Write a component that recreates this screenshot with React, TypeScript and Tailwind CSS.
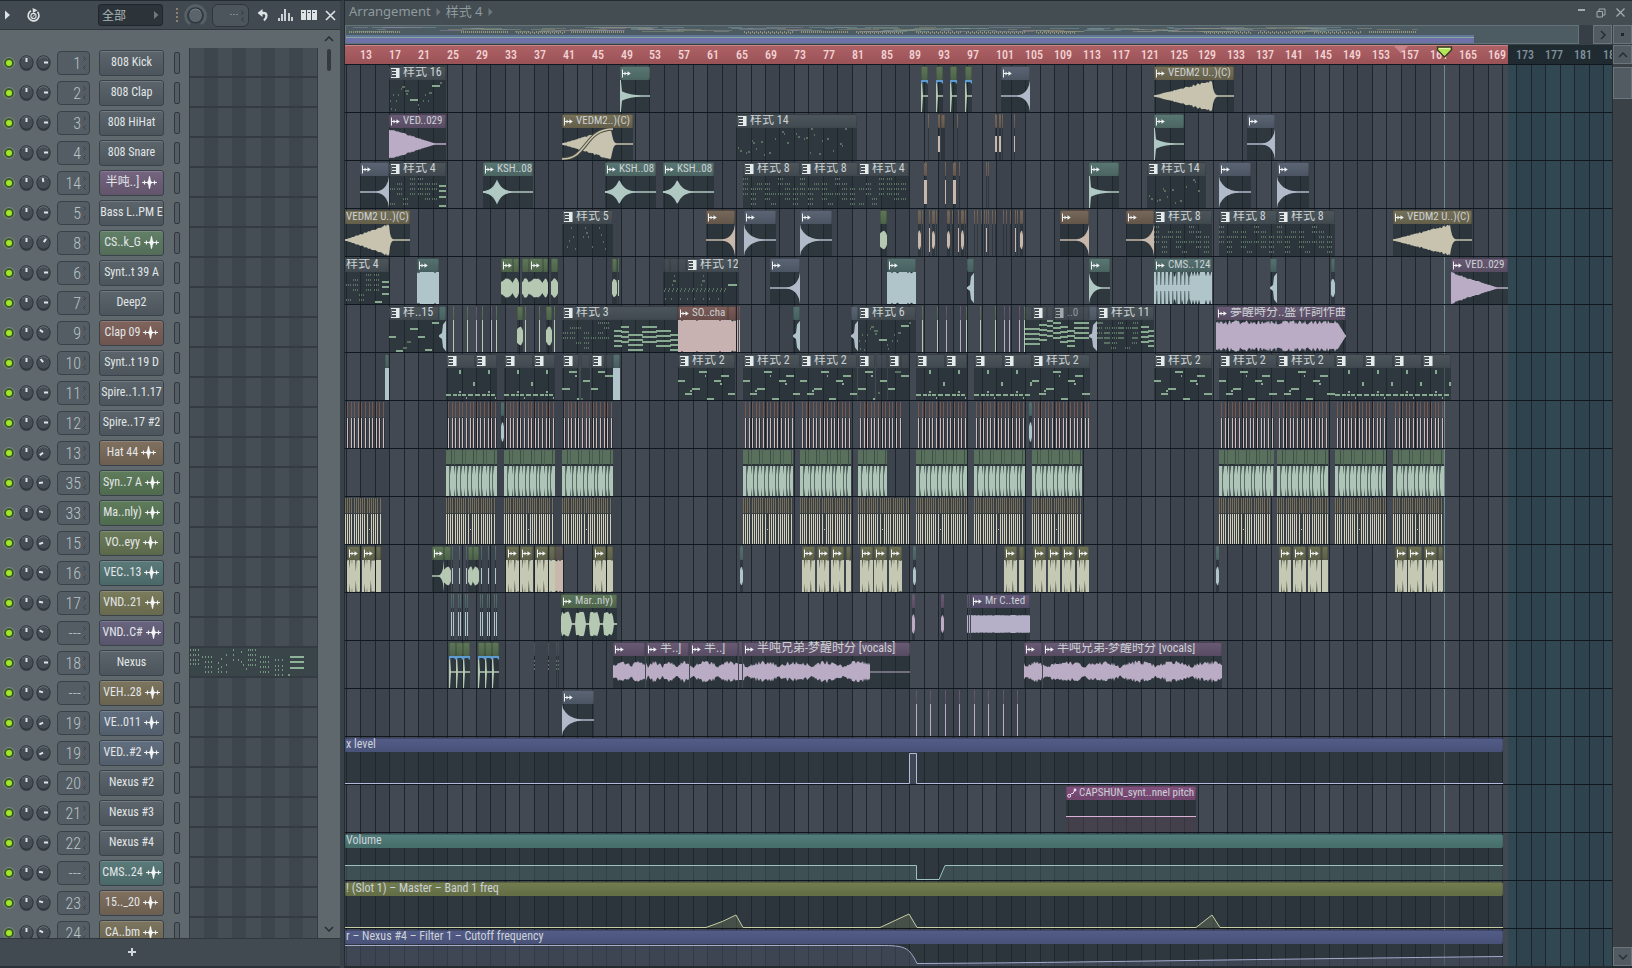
import React from "react";

const FONT = "font-['Roboto_Condensed','Liberation_Sans_Narrow','Roboto','Noto_Sans_CJK_SC',sans-serif]";

/* ---------- helpers ---------- */

const BAR = 7.225;
const barX = (bar: number) => Math.round(44.3 + (bar - 17) * BAR);
const SONG_END = 1163;

function noise(seed: number) {
  let s = seed * 7919 + 13;
  return () => {
    s = (s * 1103515245 + 12345) % 2147483648;
    return s / 2147483648;
  };
}

type Tone = "teal" | "purple" | "khaki" | "blue" | "brown" | "green" | "pink" | "olive" | "ice" | "lilac" | "pattern";

const HEAD: Record<Tone, string> = {
  teal: "from-[#5a7672] to-[#4c6763]",
  purple: "from-[#685a72] to-[#594c65]",
  khaki: "from-[#757058] to-[#65604a]",
  blue: "from-[#5a6472] to-[#4c5665]",
  brown: "from-[#75675a] to-[#65574a]",
  green: "from-[#5d7558] to-[#4e654b]",
  pink: "from-[#7a5c58] to-[#684d4a]",
  olive: "from-[#6c7054] to-[#5e6148]",
  ice: "from-[#55706f] to-[#486162]",
  lilac: "from-[#625a78] to-[#544d68]",
  pattern: "from-[#4b555a] to-[#414a50]",
};

const WAVE: Record<Tone, string> = {
  teal: "#b0c8c2",
  purple: "#baacc4",
  khaki: "#c7c3ae",
  blue: "#b0bac8",
  brown: "#c7b8ab",
  green: "#b4c8b2",
  pink: "#c8b1b1",
  olive: "#c5c8b2",
  ice: "#b0c5c9",
  lilac: "#b5b0c8",
  pattern: "#86a98f",
};

type Shape =
  | "decay" | "tail" | "rise" | "tri" | "swell" | "spike" | "block" | "vocal" | "song" | "blob" | "line"
  | "hit" | "syllables" | "band" | "comb" | "loop" | "sliver" | "dash" | "bits";

function envelope(shape: Shape, t: number, peak: number, r: number): number {
  switch (shape) {
    case "decay":
      return t < 0.03 ? 1 : 0.85 * Math.exp(-5 * t);
    case "tail":
      return t < 0.05 ? 1 : 0.36 * Math.exp(-3.2 * t);
    case "rise":
      return t > 0.97 ? 1 : 0.85 * Math.exp(-7 * (1 - t));
    case "sliver":
      return t < 0.5 ? 0.05 + 0.3 * t : t > 0.9 ? 0.95 : 0.4 + t * 0.55;
    case "tri":
      return Math.max(0, 1 - t / 0.84) * (0.88 + r * 0.14);
    case "swell":
      return t <= peak ? Math.min(1, (0.04 + 1 * Math.pow(t / peak, 1.05)) * (0.84 + r * 0.18)) : 0.7 * Math.exp(-(t - peak) * 45);
    case "spike":
      return 0.78 * Math.exp(-Math.abs(t - peak) * 10);
    case "block":
      return r < 0.15 ? 0.92 : 1;
    case "loop":
      return r < 0.1 ? 0.95 : 1;
    case "comb":
      return r < 0.3 ? 0.72 : 1;
    case "blob":
      return 0.64 * Math.pow(Math.sin(Math.PI * Math.min(0.95, Math.max(0.1, t))), 0.35) * (0.85 + r * 0.15);
    case "syllables": {
      const u = (t * 3.95) % 1;
      return u > 0.72 ? 0.05 : (0.62 + r * 0.18) * Math.min(1, (0.8 - u) * 5) * Math.min(1, u * 9 + 0.7);
    }
    case "vocal":
      return 0.72 * (0.62 + 0.38 * r) * (0.4 + 0.6 * Math.pow(Math.abs(Math.cos(t * peak * 3.14 + 1.1)), 0.5));
    case "song":
      return t > 0.94 ? Math.max(0.05, (1 - t) * 13) : 0.72 + r * 0.26;
    case "band":
      return 0.52 + r * 0.05;
    case "line":
      return 1;
    case "dash":
      return 0.5;
    case "bits":
      return 0.75;
    case "hit":
      return t < 0.2 ? 1 : 0.04;
  }
}

interface WaveProps {
  shape: Shape;
  tone: Tone;
  w: number;
  peak?: number;
  seed?: number;
  axis?: boolean;
}

function Wave({ shape, tone, w, peak = 0.25, seed = 1, axis }: WaveProps) {
  const rnd = noise(seed + w);
  const top: string[] = [];
  const bottom: string[] = [];
  for (let x = 0; x <= w; x += 1) {
    const a = Math.max(0.03, envelope(shape, x / w, peak, rnd())) * 16;
    top.push(`${x} ${(16 - a).toFixed(1)}`);
    bottom.unshift(`${x} ${(16 + a * (shape === "vocal" ? 0.8 + rnd() * 0.2 : 1)).toFixed(1)}`);
  }
  const cuts: number[] = [];
  if (shape === "comb") for (let x = 2; x < w * 0.6; x += 4) cuts.push(x);
  return (
    <svg className="block" width={w} height={32} viewBox={`0 0 ${w} 32`} aria-hidden="true">
      <path d={`M${top.join("L")}L${bottom.join("L")}Z`} fill={WAVE[tone]} />
      {cuts.map((x) => (
        <path key={x} d={`M${x} 0h1.6l-.4 13h-.8ZM${x} 32h1.6l-.4 -13h-.8Z`} fill="#4b5a5e" />
      ))}
      {shape === "loop" && w > 8 && (
        <path d={`M2 0h1.2l-.6 9ZM2 32h1.2l-.6 -9ZM${w - 5} 0h1.6l-.8 12ZM${w - 5} 32h1.6l-.8 -12ZM4.600 0h.8l-.4 5ZM4.600 32h.8l-.4 -5Z`} fill="#5c6155" />
      )}
      {axis && <path d={`M0 16H${w}`} stroke={WAVE[tone]} />}
    </svg>
  );
}

/* ---------- note data for pattern clips: [x, y, width] ---------- */

type Note = [number, number, number];

const melody: Note[] = [[0, 12, 7], [7, 25, 7], [12, 22, 2], [14, 20, 8], [21, 3, 8], [27, 7, 1], [29, 30, 7], [36, 12, 7], [42, 15, 2], [43, 7, 8], [50, 25, 8]];
const melodyCut: Note[] = [[0, 20, 8], [7, 3, 8], [13, 7, 2], [15, 30, 3], [18, 27, 1], [19, 24, 2], [22, 12, 7], [29, 20, 7], [36, 3, 8], [42, 7, 9]];
const kick: Note[] = [[0, 26, 5], [7, 26, 4], [12, 26, 3], [13, 23, 2], [13, 2, 2], [13, 4, 2], [16, 26, 4], [20, 29, 1], [22, 26, 5], [27, 16, 2], [27, 14, 2]];
const arp: Note[] = [[1, 20, 1], [2, 28, 1], [4, 14, 1], [7, 20, 1], [6, 29, 1], [9, 14, 1], [12, 8, 1], [13, 6, 3], [16, 10, 4], [17, 13, 2], [21, 19, 8], [29, 24, 1], [30, 28, 1], [34, 20, 1], [36, 14, 1], [39, 20, 1], [40, 12, 3], [43, 5, 8], [51, 2, 2]];
const slow: Note[] = [[0, 16, 7], [7, 30, 7], [14, 27, 4], [18, 21, 4], [21, 8, 8], [29, 16, 7], [36, 29, 7], [43, 2, 7]];
const sparse: Note[] = [[2, 19, 1], [4, 22, 2], [10, 24, 1], [12, 23, 2], [16, 12, 1], [17, 14, 2], [20, 20, 1], [25, 13, 2], [28, 26, 1], [33, 24, 2], [39, 10, 1], [46, 3, 2], [48, 5, 1], [51, 14, 2]];
const riff: Note[] = [[5, 22, 1], [7, 16, 1], [9, 3, 1], [11, 12, 1], [13, 24, 1], [21, 12, 1], [23, 3, 1], [24, 8, 2], [26, 12, 1], [30, 22, 1], [37, 3, 1], [39, 10, 1], [41, 17, 1], [43, 24, 1]];

function dots(w: number, seed = 3): Note[] {
  const out: Note[] = [];
  const rnd = noise(seed);
  for (let c = 0; c < w - 4; c += 7) {
    const base = Math.floor(rnd() * 3) * 5 + 2;
    const offset = Math.floor(rnd() * 2);
    for (let row = 0; row < 4; row += 1) {
      if (rnd() < 0.3) continue;
      out.push([c + offset, base + row * 5, 1], [c + offset + 2, base + row * 5, 1], [c + offset + 4, base + row * 5, 1]);
    }
  }
  return out;
}

function chords(from: number, to: number, seed: number, low = 0): Note[] {
  const out: Note[] = [];
  const rnd = noise(seed);
  for (let c = from; c < to - 3; c += 7) {
    const base = low + Math.floor(rnd() * 3) * 4;
    for (let k = 0; k < 4; k += 1) out.push([c, base + k * 5, 8]);
  }
  return out;
}

function strum(w: number): Note[] {
  const out: Note[] = [];
  for (let x = 1; x < w - 14; x += 4) out.push([x, 18, 1], [x + 1, 16, 1]);
  for (const x of [2, 8, 17, 24, 31, 40, 46, 55]) out.push([x, 26, 1]);
  for (const x of [11, 40]) out.push([x - 2, 12, 1], [x - 1, 8, 2], [x, 3, 1], [x + 1, 8, 1]);
  out.push([65, 12, 9]);
  return out;
}

const between = (notes: Note[], from: number, to: number): Note[] => notes.filter(([x]) => x >= from && x < to).map(([x, y, n]): Note => [x - from, y, n]);

function Notes({ notes, w, bright }: { notes: Note[]; w: number; bright?: boolean }) {
  return (
    <svg className="block" width={w} height={32} viewBox={`0 0 ${w} 32`} aria-hidden="true" shapeRendering="crispEdges">
      {notes.map(([x, y, nw], i) => (
        <rect key={i} x={x} y={Math.min(30, y)} width={nw} height={2} fill={bright || nw >= 7 ? "#86a98f" : "#587162"} />
      ))}
    </svg>
  );
}

/* ---------- small glyphs ---------- */

function WaveGlyph() {
  return (
    <svg className="shrink-0" width="9" height="9" viewBox="0 0 9 9" aria-hidden="true">
      <path d="M0.500 0.500v8M1 4.500h7" stroke="#eef1f2" fill="none" />
      <path d="M2.500 2.600L4.600 4.500L2.500 6.400ZM5.400 2.200L8.800 4.500L5.400 6.800Z" fill="#eef1f2" />
    </svg>
  );
}

function PatternGlyph() {
  return (
    <svg className="shrink-0" width="9" height="10" viewBox="0 0 9 10" aria-hidden="true" shapeRendering="crispEdges">
      <path d="M5 0h3v10H5Z M0 0h6v1H0Z M1 3h4v1H1Z M1 6h4v1H1Z M0 9h6v1H0Z" fill="#e6ebec" />
      <path d="M0 1h1v8H0Z" fill="#5d676c" />
      <path d="M8 0h1v10H8Z" fill="#9aa5aa" />
    </svg>
  );
}

function ChannelWave() {
  return (
    <svg className="shrink-0" width="15" height="13" viewBox="0 0 15 13" aria-hidden="true">
      <path d="M0 6.500h15M2.500 4.500v4M12.500 4.500v4" stroke="#eef1f2" strokeWidth="1.200" fill="none" />
      <path d="M4.800 6.500L6.200 4.500L7 0.200H8L8.800 4.500L10.200 6.500L8.800 8.500L8 12.800H7L6.200 8.500Z" fill="#f2f4f5" />
    </svg>
  );
}

/* ---------- clips ---------- */

interface ClipData {
  x: number;
  e: number;
  tone: Tone;
  label?: string;
  icon?: boolean;
  shape?: Shape;
  peak?: number;
  notes?: Note[];
  bright?: boolean;
  cut?: boolean;
  dim?: boolean;
  blue?: boolean;
  fade?: boolean;
}

const AXIS_SHAPES: Shape[] = ["decay", "tail", "rise", "tri", "swell", "spike", "hit", "syllables"];
const isLatin = (text: string) => /^[\x20-\x7e]*$/.test(text);

function Clip(c: ClipData) {
  const w = c.e - c.x;
  return (
    <div className="absolute top-px h-[47px] overflow-hidden" style={{ left: c.x, width: w }}>
      <div
        className={`flex h-[14px] items-center gap-[3px] overflow-hidden whitespace-nowrap rounded-[2px] bg-linear-to-b text-[#ccd2d5] ${w > 3 ? "border border-black/15" : ""} ${HEAD[c.tone]} ${c.cut ? "" : "pl-px"} ${c.dim ? "opacity-60" : ""} ${c.label && isLatin(c.label) ? "text-[11px]" : "text-[12px]"}`}
      >
        {c.icon && (c.tone === "pattern" ? <PatternGlyph /> : <WaveGlyph />)}
        {c.label && <span className="pb-px leading-[13px]">{c.label}</span>}
      </div>
      <div className="relative h-[33px] bg-[#1e2a2d]/55">
        {c.shape && <Wave shape={c.shape} tone={c.tone} w={w} peak={c.peak} seed={c.x} axis={AXIS_SHAPES.includes(c.shape)} />}
        {c.notes && <Notes notes={c.notes} w={w} bright={c.bright} />}
        {c.blue && <svg className="absolute left-0 top-0" width={w} height="5" viewBox="0 0 7 5" preserveAspectRatio="none"><path d="M0 0H7V4L5 2L2 2L0 4Z" fill="#5b9bd0" /></svg>}
        {c.fade && (
          <svg className="absolute left-0 top-0" width="52" height="32" viewBox="0 0 52 32" aria-hidden="true">
            <path d="M0 31C26 31 22 1 51 1" stroke="#4a4b40" strokeWidth="3.400" fill="none" />
            <path d="M0 31C26 31 22 1 51 1" stroke="#c7c3ae" strokeWidth="1.600" fill="none" />
          </svg>
        )}
      </div>
    </div>
  );
}

const pat = (x: number, e: number, label: string | undefined, notes: Note[], extra: Partial<ClipData> = {}): ClipData => ({ x, e, tone: "pattern", icon: e - x > 11, label, notes, ...extra });
const wav = (x: number, e: number, tone: Tone, shape: Shape, label?: string, extra: Partial<ClipData> = {}): ClipData => ({ x, e, tone, shape, label, icon: e - x > 12, ...extra });
const slivers = (tone: Tone, shape: Shape, xs: number[], w = 1): ClipData[] => xs.map((x) => ({ x, e: x + w, tone, shape }));
const marks = (tone: Tone, xs: number[], w = 1): ClipData[] => xs.map((x) => ({ x, e: x + w, tone }));

function kicks(x: number, e: number): ClipData[] {
  return [pat(x, Math.min(x + 29, e), undefined, kick, { bright: true }), pat(x + 29, e, undefined, kick, { bright: true })];
}

const LINE_GROUPS: [number, number][] = [[0, 41], [101, 152], [159, 210], [217, 268], [398, 448], [455, 506], [513, 557], [571, 622], [629, 680], [687, 744], [874, 929], [932, 983], [990, 1041], [1048, 1099]];
const BLOCK_GROUPS: [number, number][] = [[101, 152], [159, 210], [217, 268], [398, 448], [455, 506], [513, 542], [571, 622], [629, 680], [687, 737], [874, 929], [932, 983], [990, 1041], [1048, 1099]];
const HAT_GROUPS: [number, number][] = [[0, 36], [101, 151], [159, 209], [217, 267], [398, 448], [455, 506], [513, 564], [571, 622], [629, 679], [687, 737], [874, 925], [932, 983], [990, 1041], [1048, 1098]];

function StripeGroup({ x, e, kind }: { x: number; e: number; kind: "line" | "block" | "hat" }) {
  const w = e - x;
  const items: React.ReactNode[] = [];
  if (kind === "line") {
    for (let i = 2; i < w; i += 3.61) {
      const px = Math.round(i);
      items.push(<rect key={`d${px}`} x={px + 1} y={16} width={1} height={31} fill="#2b3238" />);
      items.push(<rect key={px} x={px} y={0} width={1} height={15} fill="#77584f" />, <rect key={`b${px}`} x={px} y={16} width={1} height={31} fill="#d0b9b9" />);
    }
  } else if (kind === "block") {
    items.push(<rect key="h" width={w} height={14} fill="#58705c" />, <rect key="d" y={14} width={w} height={2} fill="#2b3538" />, <rect key="w" y={16} width={w} height={31} fill="#aec4b6" />);
    for (let i = 3, n = 0; i < w; i += 3.61, n += 1) {
      const px = Math.round(i);
      if (n % 3 !== 1) items.push(<path key={px} d={`M${px} 16h1v31h-1Z`} fill="#3f4f4d" opacity={0.75} />);
      items.push(<path key={`n${px}`} d={`M${px + 1} 16h1.2l-.6 9ZM${px + 1} 47h1.2l-.6 -9Z`} fill="#42524f" />);
    }
    for (let i = 5; i < w; i += 10.8) items.push(<rect key={`s${i}`} x={Math.round(i)} width={1} height={15} fill="#3f4f48" />, <rect key={`t${i}`} x={Math.round(i) + 3} width={1} height={15} fill="#4a5d50" />);
  } else {
    items.push(<rect key="bg" width={w} height={47} fill="#373f45" />);
    for (let i = 0, n = 0; i < w; i += 2.16, n += 1) {
      const px = Math.round(i);
      items.push(<rect key={px} x={px} width={1} height={15} fill="#786f5a" />);
      if (n % 13 !== 11) items.push(<rect key={`b${px}`} x={px} y={16} width={1} height={31} fill="#d2ceba" />);
      else items.push(<rect key={`b${px}`} x={px} y={31} width={1} height={1} fill="#cbc7b4" />);
    }
  }
  return (
    <svg className="absolute top-px" style={{ left: x }} width={w} height={47} viewBox={`0 0 ${w} 47`} aria-hidden="true" shapeRendering={kind === "block" ? "auto" : "crispEdges"}>
      {items}
    </svg>
  );
}

/* ---------- automation lanes ---------- */

interface LaneData {
  x: number;
  e: number;
  label: string;
  head: string;
  line: string;
  stroke: string;
  fill: string;
  glyph?: boolean;
}

function Lane({ x, e, label, head, line, stroke, fill, glyph }: LaneData) {
  const w = e - x;
  return (
    <div className="absolute top-px h-[47px] overflow-hidden" style={{ left: x, width: w }}>
      <div className={`flex h-[14px] items-center gap-[2px] whitespace-nowrap rounded-[2px] border border-black/10 bg-linear-to-b text-[#ccd2d8] ${glyph ? "text-[11px]" : "text-[12px]"} ${head}`}>
        {glyph && (
          <svg className="shrink-0" width="10" height="10" viewBox="0 0 10 10" aria-hidden="true">
            <path d="M3 7L4.500 5.500H6L7.500 2.500" stroke="#eddff0" fill="none" />
            <circle cx="2.200" cy="7.800" r="1.500" stroke="#eddff0" fill="none" />
            <circle cx="8" cy="2" r="1.400" fill="#eddff0" />
          </svg>
        )}
        <span className="pb-px leading-[13px]">{label}</span>
      </div>
      <svg className="block bg-[#1e2a2d]/55" width={w} height={33} viewBox={`0 0 ${w} 33`} aria-hidden="true">
        <path d={`${line}V33H0Z`} fill={fill} />
        <path d={line} stroke={stroke} fill="none" />
      </svg>
    </div>
  );
}

const LANES: Record<number, LaneData> = {
  14: { x: 0, e: 1158, label: "x level", head: "from-[#535c88] to-[#495278]", line: "M0 31.500H564.500V1.500H571.500V31.500H1158", stroke: "#b4badb", fill: "rgba(130,135,170,.2)" },
  15: { x: 721, e: 851, label: "CAPSHUN_synt..nnel pitch", head: "from-[#80507c] to-[#70446c]", line: "M0 16.500H130", stroke: "#dcb0d6", fill: "rgba(170,110,140,.2)", glyph: true },
  16: { x: 0, e: 1158, label: "Volume", head: "from-[#527c7a] to-[#456e6b]", line: "M0 17.500H571.500V31.500H594L600 17.500H1158", stroke: "#9cc0c0", fill: "rgba(130,180,170,.2)" },
  17: { x: 0, e: 1158, label: "! (Slot 1) – Master – Band 1 freq", head: "from-[#727c50] to-[#646e45]", line: "M0 31.500H361Q378 26 391 19L398 31.500H535L564 18L572 31.500H851L867 19L875 31.500H1158", stroke: "#c6cca4", fill: "rgba(180,190,130,.2)" },
  18: { x: 0, e: 1158, label: "r – Nexus #4 – Filter 1 – Cutoff frequency", head: "from-[#535c88] to-[#495278]", line: "M0 1.500H535C560 1.500 564 3 572 19.500C700 19 850 16 1158 12.500", stroke: "#a4aace", fill: "rgba(130,135,170,.2)" },
};

/* ---------- track contents ---------- */

const strumNotes = strum(76);

const TRACKS: ClipData[][] = [
  [
    pat(44, 101, "样式 16", arp),
    wav(275, 305, "teal", "tail"),
    ...[576, 591, 605, 620].map((x) => wav(x, x + 7, "green", "hit", undefined, { blue: true })),
    wav(656, 685, "blue", "rise"),
    wav(809, 889, "khaki", "swell", "VEDM2 U..)(C)", { peak: 0.73 }),
  ],
  [
    wav(44, 101, "purple", "tri", "VED..029"),
    wav(217, 288, "khaki", "swell", "VEDM2..)(C)", { peak: 0.7, fade: true }),
    pat(391, 512, "样式 14", [...sparse, ...sparse.map(([x, y, n]): Note => [x + 58, (y + 12) % 26, n])]),
    ...slivers("brown", "dash", [593], 2), ...marks("brown", [583, 612]), ...marks("brown", [596], 4),
    ...slivers("brown", "dash", [650, 654], 2), ...marks("brown", [657]),
    ...slivers("brown", "dash", [669], 1),
    wav(809, 839, "teal", "tail"),
    wav(902, 930, "blue", "rise"),
  ],
  [
    wav(15, 44, "blue", "rise"),
    pat(44, 101, "样式 4", [...dots(50, 4), [50, 9, 7], [50, 14, 7], [50, 20, 7], [50, 29, 7]]),
    wav(138, 188, "teal", "spike", "KSH..08", { peak: 0.28 }),
    wav(260, 311, "teal", "spike", "KSH..08", { peak: 0.28 }),
    wav(318, 369, "teal", "spike", "KSH..08", { peak: 0.28 }),
    pat(398, 455, "样式 8", dots(57, 5)),
    pat(455, 513, "样式 8", dots(57, 5)),
    pat(513, 564, "样式 4", dots(50, 4)),
    ...slivers("brown", "bits", [579, 608], 3),
    ...slivers("brown", "bits", [600], 1),
    ...marks("brown", [614, 641, 643]),
    wav(744, 774, "teal", "tail"),
    pat(802, 861, "样式 14", sparse),
    wav(874, 906, "blue", "decay"),
    wav(932, 964, "blue", "decay"),
  ],
  [
    wav(0, 65, "khaki", "swell", "VEDM2 U..)(C)", { peak: 0.68, cut: true, icon: false }),
    pat(217, 268, "样式 5", riff),
    wav(361, 390, "brown", "rise"),
    wav(399, 431, "blue", "decay"),
    wav(455, 487, "blue", "decay"),
    wav(535, 542, "green", "blob"),
    ...slivers("brown", "blob", [573, 587, 602, 616], 3),
    ...slivers("brown", "bits", [584, 613, 641, 670], 1),
    ...marks("brown", [577, 591, 607, 620, 629, 632, 636, 639, 643, 647, 650, 658, 661, 665, 672]),
    ...slivers("brown", "blob", [675], 3),
    wav(715, 744, "brown", "rise"),
    wav(781, 809, "brown", "rise"),
    pat(809, 867, "样式 8", dots(57, 5)),
    pat(874, 932, "样式 8", dots(57, 5)),
    pat(932, 990, "样式 8", dots(57, 5)),
    wav(1048, 1127, "khaki", "swell", "VEDM2 U..)(C)", { peak: 0.73 }),
  ],
  [
    pat(0, 44, "样式 4", [...dots(36, 4), [37, 9, 7], [37, 14, 7], [37, 21, 7], [30, 29, 7]], { icon: false, cut: true }),
    wav(72, 94, "ice", "block"),
    wav(156, 168, "green", "blob", undefined, { icon: true }), wav(168, 174, "green", "blob"), wav(177, 184, "green", "blob"),
    wav(184, 198, "green", "blob"), wav(198, 203, "green", "blob"), wav(206, 213, "green", "blob"),
    wav(267, 272, "green", "blob"), wav(273, 274, "green", "dash"),
    pat(318, 325, undefined, between(strumNotes, 0, 7), { dim: true }), pat(325, 333, undefined, between(strumNotes, 7, 15), { dim: true }), pat(333, 341, undefined, between(strumNotes, 15, 23), { dim: true }),
    pat(341, 394, "样式 12", between(strumNotes, 23, 76)),
    wav(425, 455, "blue", "rise"),
    wav(542, 571, "ice", "block"),
    wav(622, 629, "ice", "sliver"),
    wav(744, 765, "teal", "decay"),
    wav(809, 867, "ice", "comb", "CMS..124"),
    wav(925, 932, "ice", "sliver"),
    wav(986, 990, "ice", "blob"),
    wav(1106, 1163, "purple", "tri", "VED..029"),
  ],
  [
    pat(44, 94, "样..15", slow),
    wav(94, 101, "ice", "sliver"),
    ...slivers("green", "line", [108, 122, 137, 151, 180, 194, 209]),
    ...slivers("purple", "line", [131, 146]),
    wav(172, 178, "green", "blob"), wav(201, 207, "green", "blob"),
    pat(217, 333, "样式 3", [...dots(52, 6), ...chords(52, 116, 3, 6)]),
    wav(333, 383, "pink", "block", "SO..cha"), wav(383, 391, "pink", "block"),
    ...slivers("pink", "line", [392, 394]),
    wav(448, 455, "ice", "sliver"), wav(506, 513, "blue", "sliver"),
    pat(513, 571, "样式 6", arp),
    ...slivers("green", "line", [577, 592, 621, 635, 650, 679]),
    ...slivers("purple", "line", [601, 615, 659, 664, 674]),
    pat(680, 687, undefined, chords(0, 7, 1), { dim: true }), pat(687, 702, undefined, chords(0, 15, 4)), pat(702, 708, undefined, chords(0, 7, 2), { dim: true }),
    pat(708, 744, "..0", chords(0, 36, 8, 2), { dim: true }),
    wav(744, 752, "blue", "sliver"),
    pat(752, 809, "样式 11", [...dots(44, 9), ...dots(44, 12), ...chords(44, 57, 2, 6)]),
    wav(871, 1001, "purple", "song", "夢醒時分..盛 作詞作曲"),
  ],
  [
    wav(40, 44, "ice", "block"),
    ...kicks(101, 152), ...kicks(159, 210),
    pat(217, 234, undefined, melodyCut, { bright: true }), pat(236, 245, undefined, [[0, 30, 2], [2, 12, 7]], { dim: true }), pat(246, 260, undefined, [[0, 20, 7], [7, 3, 7]]), pat(260, 268, undefined, [[0, 7, 8]], { dim: true }),
    wav(268, 275, "ice", "block"),
    ...[333, 398, 455].map((x) => pat(x, x + 57, "样式 2", melody, { bright: true })),
    pat(513, 530, undefined, melodyCut, { bright: true }), pat(531, 542, undefined, [[2, 24, 2], [4, 12, 7]], { dim: true, icon: false }), pat(543, 556, undefined, [[0, 20, 7], [7, 3, 6]]), pat(556, 564, undefined, [[0, 7, 8]], { dim: true }),
    ...kicks(571, 622), ...kicks(629, 687),
    ...[687, 809, 874, 932].map((x) => pat(x, x + 58, "样式 2", melody, { bright: true })),
    ...kicks(990, 1048), ...kicks(1048, 1106),
  ],
  [wav(156, 159, "ice", "blob"), wav(684, 687, "ice", "blob")],
  [],
  [],
  [
    ...[[2, 15], [17, 30], [31, 36], [161, 174], [175, 188], [190, 203], [204, 210], [248, 261], [262, 268], [457, 470], [472, 484], [486, 499], [501, 506], [515, 528], [529, 542], [544, 557], [659, 672], [674, 679], [688, 701], [703, 715], [717, 730], [732, 744], [934, 946], [948, 961], [963, 976], [977, 983], [1050, 1062], [1063, 1077], [1079, 1092], [1093, 1098]].map(
      ([x, e]) => wav(x, e, "olive", "loop", undefined, { icon: e - x > 10 }),
    ),
    wav(87, 99, "green", "rise", undefined, { icon: true }), wav(93, 99, "green", "blob"), wav(99, 106, "green", "blob"),
    wav(123, 128, "green", "blob"), wav(128, 134, "green", "blob"),
    ...slivers("ice", "dash", [107, 114, 121, 136, 143, 150]),
    wav(210, 218, "brown", "block", undefined, { dim: true }),
    wav(395, 398, "ice", "blob"), wav(568, 571, "ice", "blob"), wav(871, 874, "ice", "blob"),
  ].filter((c) => c.x !== 93),
  [
    ...slivers("ice", "bits", [106, 108, 113, 115, 120, 122, 135, 137, 142, 144, 149, 151]),
    wav(216, 272, "green", "syllables", "Mar..nly)"),
    wav(567, 570, "purple", "blob"), wav(596, 599, "purple", "blob"),
    ...slivers("lilac", "band", [622, 624]),
    wav(626, 685, "lilac", "band", "Mr C..ted"),
  ],
  [
    ...[104, 111, 118, 133, 140, 147].map((x) => wav(x, x + 7, "green", "hit", undefined, { blue: true })),
    ...[189, 203, 211, 213].map((x): ClipData => ({ x, e: x + 1, tone: "pattern", notes: [[0, 4, 1], [0, 8, 1], [0, 12, 1]] })),
    wav(268, 300, "purple", "vocal", undefined, { peak: 2 }), wav(301, 344, "purple", "vocal", "半..]", { peak: 3 }), wav(345, 393, "purple", "vocal", "半..]", { peak: 2 }), wav(394, 397, "purple", "dash"),
    wav(398, 525, "purple", "vocal", undefined, { peak: 4 }),
    wav(679, 697, "purple", "vocal", undefined, { peak: 1 }), wav(698, 877, "purple", "vocal", "半吨兄弟-梦醒时分 [vocals]", { peak: 5 }),
  ],
  [wav(217, 249, "blue", "decay"), ...slivers("purple", "line", [571, 585, 600, 614, 629, 643, 658, 672])],
  [], [], [], [], [],
];

function VocalTail() {
  return (
    <div className="absolute top-px h-[47px] w-[167px]" style={{ left: 398 }}>
      <div className="flex h-[14px] items-center gap-[3px] whitespace-nowrap rounded-[2px] border border-black/15 bg-linear-to-b from-[#685a72] to-[#594c65] pl-px text-[12px] text-[#ccd2d5]">
        <WaveGlyph />
        <span className="pb-px leading-[13px]">半吨兄弟-梦醒时分 [vocals]</span>
      </div>
      <svg className="ml-[127px] block bg-[#1e2a2d]/55" width="40" height="33" viewBox="0 0 40 33" aria-hidden="true">
        <path d="M0 16H40" stroke="#baacc4" />
      </svg>
    </div>
  );
}

function Track({ index }: { index: number }) {
  const lane = LANES[index];
  const groups = index === 7 ? LINE_GROUPS : index === 8 ? BLOCK_GROUPS : index === 9 ? HAT_GROUPS : [];
  const kind = index === 7 ? "line" : index === 8 ? "block" : "hat";
  return (
    <div className="relative h-12 shrink-0 border-t border-[#11171e]">
      {groups.map(([x, e]) => (
        <StripeGroup key={x} x={x} e={e} kind={kind} />
      ))}
      {TRACKS[index].map((c, i) => (
        <Clip key={i} {...c} />
      ))}
      {index === 12 && <VocalTail />}
      {lane && <Lane {...lane} />}
    </div>
  );
}

/* ---------- channel rack ---------- */

type ChannelTone = "plain" | "purple" | "green" | "red" | "brown" | "olive" | "teal" | "moss" | "violet" | "khaki" | "blue" | "leaf";

const CHANNEL_BG: Record<ChannelTone, string> = {
  plain: "from-[#5b656b] to-[#4b555b]",
  purple: "from-[#756580] to-[#62546b]",
  green: "from-[#628068] to-[#526c58]",
  red: "from-[#80645e] to-[#6e534e]",
  brown: "from-[#80705f] to-[#6c5e50]",
  leaf: "from-[#5f7c5c] to-[#4f6a4d]",
  olive: "from-[#6c7c5a] to-[#5b694b]",
  teal: "from-[#5b7a7a] to-[#4b6868]",
  moss: "from-[#7a7c5c] to-[#68694d]",
  violet: "from-[#696580] to-[#58546c]",
  khaki: "from-[#7c755f] to-[#69634f]",
  blue: "from-[#626f80] to-[#525e6c]",
};

interface Channel {
  slot: string;
  name: string;
  tone?: ChannelTone;
  turn?: number;
}

const CHANNELS: Channel[] = [
  { slot: "1", name: "808 Kick" },
  { slot: "2", name: "808 Clap" },
  { slot: "3", name: "808 HiHat" },
  { slot: "4", name: "808 Snare" },
  { slot: "14", name: "半吨..]", tone: "purple", turn: -10 },
  { slot: "5", name: "Bass L..PM E" },
  { slot: "8", name: "CS..k_G", tone: "green", turn: 35 },
  { slot: "6", name: "Synt..t 39 A" },
  { slot: "7", name: "Deep2" },
  { slot: "9", name: "Clap 09", tone: "red", turn: -55 },
  { slot: "10", name: "Synt..t 19 D", turn: -40 },
  { slot: "11", name: "Spire..1.1.17" },
  { slot: "12", name: "Spire..17 #2" },
  { slot: "13", name: "Hat 44", tone: "brown", turn: -125 },
  { slot: "35", name: "Syn..7 A", tone: "leaf", turn: -95 },
  { slot: "33", name: "Ma..nly)", tone: "leaf", turn: -75 },
  { slot: "15", name: "VO..eyy", tone: "olive", turn: -110 },
  { slot: "16", name: "VEC..13", tone: "teal", turn: -80 },
  { slot: "17", name: "VND..21", tone: "moss", turn: -80 },
  { slot: "---", name: "VND..C#", tone: "violet", turn: -60 },
  { slot: "18", name: "Nexus" },
  { slot: "---", name: "VEH..28", tone: "khaki", turn: -75 },
  { slot: "19", name: "VE..011", tone: "blue", turn: -115 },
  { slot: "19", name: "VED..#2", tone: "blue", turn: -115 },
  { slot: "20", name: "Nexus #2" },
  { slot: "21", name: "Nexus #3" },
  { slot: "22", name: "Nexus #4" },
  { slot: "---", name: "CMS..24", tone: "teal", turn: -80 },
  { slot: "23", name: "15.._20", tone: "brown", turn: -75 },
  { slot: "24", name: "CA..bm", tone: "khaki", turn: -65 },
];

function Knob({ turn, label }: { turn: number; label: string }) {
  return (
    <label className="relative block h-4 w-[15px]">
      <input type="range" min={-135} max={135} defaultValue={turn} aria-label={label} className="absolute inset-0 h-4 w-[15px] opacity-0" />
      <svg width="15" height="16" viewBox="0 0 15 16" className="block" aria-hidden="true">
        <ellipse cx="7.500" cy="9.500" rx="6.500" ry="6.500" fill="#353d42" />
        <circle cx="7.500" cy="7.500" r="6.700" fill="#454e54" stroke="#2d353a" />
        <path d="M3 4A5.600 5.600 0 0 1 12 4" stroke="#646e74" fill="none" />
        <path d="M7.500 7V3" stroke="#e0e5e8" strokeWidth="2" transform={`rotate(${turn} 7.500 7.500)`} />
      </svg>
    </label>
  );
}

const NEXUS_NOTES: Note[] = [
  ...[0, 3, 5, 8].flatMap((x): Note[] => [[x, 1, 1], [x, 6, 1], [x, 11, 1], [x, 15, 1]]),
  [12, 8, 1],
  ...[15, 18, 21].flatMap((x): Note[] => [[x, 8, 1], [x, 13, 1], [x, 18, 1], [x, 23, 1]]),
  ...[28, 31, 36].flatMap((x, i): Note[] => [[x, 14 - i * 4, 1], [x, 20 - i * 2, 1], [x, 23, 1]]),
  [43, 1, 1], [43, 6, 1], [43, 11, 1], [48, 11, 1], [51, 3, 1], [51, 13, 1], [53, 16, 1], [56, 20, 1],
  ...[58, 60, 62, 65].flatMap((x): Note[] => [[x, 1, 1], [x, 6, 1], [x, 11, 1], [x, 16, 1]]),
  ...[70, 73, 75, 78].flatMap((x): Note[] => [[x, 8, 1], [x, 13, 1], [x, 18, 1], [x, 23, 1]]),
  ...[85, 88, 92].flatMap((x): Note[] => [[x, 11, 1], [x, 17, 1], [x, 21, 1], [x, 26, 1]]),
  [98, 26, 2], [100, 8, 14], [100, 13, 14], [100, 19, 14],
];

function ChannelRow({ slot, name, tone = "plain", turn = 90 }: Channel) {
  const active = name === "Nexus";
  return (
    <div className="flex h-[30px] shrink-0 items-center">
      <input type="checkbox" defaultChecked aria-label={`${name} on`} className="ml-[4px] size-[10px] shrink-0 appearance-none rounded-full border-2 border-[#3d5a2a] bg-[#a0e828] outline outline-[#7d8a7d]" />
      <div className="ml-[5px] flex shrink-0 gap-[2px]">
        <Knob turn={0} label={`${name} pan`} />
        <Knob turn={turn} label={`${name} volume`} />
      </div>
      <div className="relative ml-[6px] h-6 w-[33px] shrink-0 rounded-[4px] border border-[#394248] bg-[#535d63]">
        <input defaultValue={slot} aria-label={`${name} mixer track`} className="h-full w-[23px] bg-transparent text-right text-[16px] font-light text-[#bac3c8] outline-none" />
        <svg className="absolute right-[2px] top-[4px]" width="5" height="14" viewBox="0 0 5 14" aria-hidden="true">
          <path d="M1.500 0.500L3.500 2.500L1.500 4.500M3.500 9.500L1.500 11.500L3.500 13.500" stroke="#363f45" fill="none" />
        </svg>
      </div>
      <button className={`ml-[9px] flex h-[26px] w-[65px] shrink-0 items-center justify-center gap-[3px] whitespace-nowrap rounded-[3px] border border-[#39424a] bg-linear-to-b pb-[2px] text-[12px] leading-none text-[#e2e6e8] shadow-[inset_0_1px_0_rgba(255,255,255,0.14)] ${CHANNEL_BG[tone]}`}>
        <span>{name}</span>
        {tone !== "plain" && <ChannelWave />}
      </button>
      <button aria-label={`Select ${name}`} className="ml-[10px] h-[22px] w-[6px] shrink-0 rounded-[2px] border border-[#30383e] bg-[#535d63]" />
      <div className={`ml-[9px] grid h-[30px] w-[129px] shrink-0 grid-cols-9 border-x border-b-2 border-[#343c42] ${active ? "bg-[#3a454a]" : "bg-[#454e55]"}`}>
        {active ? (
          <svg className="col-span-9" width="127" height="28" viewBox="0 0 127 28" aria-hidden="true" shapeRendering="crispEdges">
            {NEXUS_NOTES.map(([x, y, w], i) => (
              <rect key={i} x={x} y={y} width={w} height={2} fill={w > 5 ? "#8fb398" : "#759680"} />
            ))}
          </svg>
        ) : (
          Array.from({ length: 9 }, (_, i) => <span key={i} className={i % 2 ? "bg-[#3d464d]" : ""} />)
        )}
      </div>
    </div>
  );
}

function Chevron({ d, className = "" }: { d: string; className?: string }) {
  return (
    <svg className={className} width="10" height="10" viewBox="0 0 10 10" aria-hidden="true">
      <path d={d} stroke="#262e33" strokeWidth="1.500" fill="none" />
    </svg>
  );
}

const UP = "M1 7L5 3L9 7";
const DOWN = "M1 3L5 7L9 3";
const RIGHT = "M3 1L7 5L3 9";

function ChannelRack() {
  return (
    <section className="flex w-[344px] shrink-0 flex-col border-r-4 border-t border-[#384147] border-t-[#252c31] bg-[#5f686d]">
      <header className="flex h-[29px] shrink-0 items-center border-b border-[#30383d] bg-[#404a50]">
        <button aria-label="Options" className="ml-[4px]">
          <svg width="7" height="10" viewBox="0 0 7 10" aria-hidden="true"><path d="M1 0.500L6 5L1 9.500Z" fill="#dde2e4" /></svg>
        </button>
        <button aria-label="Loop" className="ml-[15px]">
          <svg width="15" height="15" viewBox="0 0 15 15" aria-hidden="true">
            <path d="M5 2.800A5.400 5.400 0 1 0 11.500 3.800" stroke="#dde2e4" strokeWidth="1.700" fill="none" />
            <path d="M6.500 0L11.500 2.200L7 5Z" fill="#dde2e4" />
            <circle cx="7.500" cy="8" r="2.600" stroke="#dde2e4" strokeWidth="1.100" fill="none" />
            <path d="M6.300 9.200L9 6.500" stroke="#dde2e4" />
          </svg>
        </button>
        <div className="relative ml-[57px]">
          <select aria-label="Channel group" className="block h-[22px] w-[65px] appearance-none rounded-[3px] border border-[#20272b] bg-[#2c3439] pl-[3px] font-['Noto_Sans_CJK_SC',sans-serif] text-[12px] leading-none text-[#aab4b8]">
            <option>全部</option>
          </select>
          <svg className="absolute right-[4px] top-[7px]" width="5" height="8" viewBox="0 0 5 8" aria-hidden="true"><path d="M0 0L4.500 4L0 8Z" fill="#6f797e" /></svg>
        </div>
        <svg className="ml-[13px]" width="3" height="16" viewBox="0 0 3 16" aria-hidden="true" shapeRendering="crispEdges">
          <path d="M1 1v2M1 5v2M1 9v2M1 13v2" stroke="#90806f" strokeWidth="2" />
        </svg>
        <button aria-label="Swing" className="ml-[5px]">
          <svg width="23" height="23" viewBox="0 0 23 23" aria-hidden="true">
            <path d="M6 20A10 10 0 1 1 17 20" stroke="#566066" strokeWidth="2.600" fill="none" />
            <circle cx="11.500" cy="11.500" r="7.300" fill="#5a646a" stroke="#2f373c" strokeWidth="1.400" />
            <path d="M6.500 7.500A6.300 6.300 0 0 1 16.500 7.500" stroke="#78838a" fill="none" />
          </svg>
        </button>
        <button aria-label="Step size" className="relative ml-[5px] flex h-[23px] w-[37px] items-center justify-center rounded-[6px] border border-[#2e363b] bg-[#4b555b]">
          <svg width="9" height="2" viewBox="0 0 9 2" className="ml-[8px]" aria-hidden="true" shapeRendering="crispEdges"><path d="M0 0h2v1H0ZM3 0h2v1H3ZM6 0h2v1H6Z" fill="#7d878c" /></svg>
          <svg className="absolute right-[3px] top-[5px]" width="5" height="12" viewBox="0 0 5 12" aria-hidden="true">
            <path d="M1 0.500L3.500 2.500L1 4.500M4 7.500L1.500 9.500L4 11.500" stroke="#2f383d" fill="none" />
          </svg>
        </button>
        <button aria-label="Undo" className="ml-[8px]">
          <svg width="12" height="13" viewBox="0 0 12 13" aria-hidden="true">
            <path d="M4 4H6.500C10 4 10.800 8 7 11.500" stroke="#dde2e4" strokeWidth="2.300" fill="none" />
            <path d="M5.500 0V8L0.500 4Z" fill="#dde2e4" />
          </svg>
        </button>
        <button aria-label="Graph editor" className="ml-[9px]">
          <svg width="16" height="12" viewBox="0 0 16 12" aria-hidden="true" shapeRendering="crispEdges">
            <path d="M0 9h2v3H0ZM3 5h2v7H3ZM6 0h2v12H6ZM10 4h2v8h-2ZM13 8h2v4h-2Z" fill="#c9cfd2" />
          </svg>
        </button>
        <button aria-label="Step sequencer" className="ml-[7px]">
          <svg width="16" height="10" viewBox="0 0 16 10" aria-hidden="true" shapeRendering="crispEdges">
            <path d="M0 0h5v10H0ZM6 0h4v10H6ZM11 0h5v10h-5Z" fill="#dde2e4" />
            <path d="M1 2h2v1H1ZM7 2h2v1H7ZM12 2h2v1h-2Z" fill="#404a50" />
          </svg>
        </button>
        <button aria-label="Close channel rack" className="ml-[8px]">
          <svg width="11" height="11" viewBox="0 0 11 11" aria-hidden="true"><path d="M1 1L10 10M10 1L1 10" stroke="#dde2e4" strokeWidth="1.600" /></svg>
        </button>
      </header>
      <div className="flex min-h-0 flex-1">
        <div className="flex w-[318px] shrink-0 flex-col overflow-hidden pt-[18px]">
          {CHANNELS.map((c, i) => (
            <ChannelRow key={i} {...c} />
          ))}
        </div>
        <div className="flex flex-1 flex-col items-center pb-[4px] pt-[4px]">
          <Chevron d={UP} />
          <div className="mt-[5px] h-[22px] w-[4px] rounded-[2px] bg-[#333b41]" />
          <Chevron d={DOWN} className="mt-auto" />
        </div>
      </div>
      <footer className="flex h-[30px] shrink-0 items-center border-t border-b-2 border-t-[#30383d] border-b-[#2b3338] bg-[#404a50]">
        <button aria-label="Add channel" className="ml-[128px]">
          <svg width="9" height="9" viewBox="0 0 9 9" aria-hidden="true" shapeRendering="crispEdges"><path d="M3 0h2v8H3ZM0 3h8v2H0Z" fill="#d0d6d9" /></svg>
        </button>
      </footer>
    </section>
  );
}

/* ---------- playlist ---------- */

const MINI_COLORS = ["#8d957a", "#7f9a94", "#8f86a0", "#9a8a78", "#7d98a0"];

function Minimap() {
  const rnd = noise(11);
  const bits: React.ReactNode[] = [];
  for (let i = 0; i < 130; i += 1) {
    const x = Math.round(rnd() * 1080);
    const row = Math.floor(rnd() * 5);
    bits.push(<rect key={i} x={x} y={1 + row} width={Math.round(6 + rnd() * 38)} height={1} fill={MINI_COLORS[Math.floor(rnd() * 5)]} opacity={0.5} />);
  }
  for (const [a, e] of [[3, 55], [115, 163], [170, 220], [225, 278], [398, 448], [455, 503], [510, 558], [570, 615], [620, 680], [690, 730], [858, 905], [912, 960], [968, 1015], [1023, 1070]]) {
    for (let x = a; x < e; x += 2) bits.push(<rect key={`s${x}`} x={x} y={x % 4 ? 5 : 6} width={1} height={2} fill="#95957a" />);
  }
  return (
    <div className="h-[19px] min-w-0 flex-1 overflow-hidden border border-[#647279] bg-[#4d5c63]">
      <svg className="block" width="1233" height="17" viewBox="0 0 1233 17" aria-hidden="true" shapeRendering="crispEdges">
        <rect y="9" width="1128" height="8" fill="#62789b" />
        <rect y="11" width="1128" height="1" fill="#87a9a0" />
        <rect y="12" width="1128" height="5" fill="#6e72a8" />
        {bits}
      </svg>
    </div>
  );
}

function Timeline() {
  const labels = Array.from({ length: 44 }, (_, i) => 13 + i * 4);
  return (
    <div className="relative h-[19px] overflow-hidden bg-[#1f2a31] text-[12px] font-medium leading-[21px]">
      <div className="absolute inset-y-0 left-0 border-t border-[#c88488] bg-linear-to-b from-[#ad6165] to-[#9a5257]" style={{ width: SONG_END }} />
      <svg className="absolute left-[1049px] top-px" width="14" height="8" viewBox="0 0 14 8" aria-hidden="true"><path d="M0 0H14L7 7.500Z" fill="#c88589" /></svg>
      {labels.map((n) => (
        <span key={n} className={`absolute top-0 ${n > 171 ? "text-[#82929a]" : "text-[#f2d4d4]"}`} style={{ left: barX(n) }}>
          {n}
        </span>
      ))}
      <svg className="absolute left-[1091px] top-px" width="17" height="12" viewBox="0 0 17 12" aria-hidden="true"><path d="M1.500 1H15.500V4L8.500 11L1.500 4Z" fill="#b4e65a" stroke="#3d3a26" strokeWidth="1.400" /><path d="M3 2.500H14" stroke="#e0f7a8" /></svg>
    </div>
  );
}

function GridBackdrop() {
  const bands = Array.from({ length: 23 }, (_, i) => 5 + i * 8);
  const lines = Array.from({ length: 88 }, (_, i) => 11 + i * 2);
  return (
    <div className="absolute inset-0 overflow-hidden bg-[#434953]">
      {bands.map((b) => (
        <div key={b} className="absolute inset-y-0 bg-[#3c434c]" style={{ left: barX(b), width: barX(b + 4) - barX(b) }} />
      ))}
      <div className="absolute inset-y-0 right-0 bg-[#1c4450]/45" style={{ left: SONG_END }} />
      {lines.map((b) => (
        <div key={b} className="absolute inset-y-0 w-px bg-[#1d242c]" style={{ left: barX(b) }} />
      ))}
      <div className="absolute inset-y-0 left-[1099px] w-px bg-[#6d8a93]" />
    </div>
  );
}

function Playlist() {
  return (
    <section className="flex min-w-0 flex-1 flex-col border-b-2 border-l border-t border-[#252c31] bg-[#363f45]">
      <header className="flex h-6 shrink-0 items-center bg-[#444d52] pb-[3px] pl-[4px] pr-[7px] font-['Noto_Sans','Noto_Sans_CJK_SC',sans-serif] text-[13px] leading-none text-[#8f9a9e]">
        <span>Arrangement</span>
        <svg className="mx-[5px]" width="5" height="8" viewBox="0 0 5 8" aria-hidden="true"><path d="M0.500 0L4.500 4L0.500 8Z" fill="#6e797e" /></svg>
        <span>样式 4</span>
        <svg className="ml-[6px]" width="5" height="8" viewBox="0 0 5 8" aria-hidden="true"><path d="M0.500 0L4.500 4L0.500 8Z" fill="#6e797e" /></svg>
        <div className="ml-auto flex items-center gap-[10px] pt-[2px]">
          <button aria-label="Minimize">
            <svg width="8" height="9" viewBox="0 0 8 9" aria-hidden="true"><path d="M0 2H7" stroke="#a2abaf" strokeWidth="2" /></svg>
          </button>
          <button aria-label="Restore">
            <svg width="10" height="10" viewBox="0 0 10 10" aria-hidden="true"><path d="M1 3.500H6.500V9H1ZM3 3V1H9V7H7" stroke="#a2abaf" fill="none" /></svg>
          </button>
          <button aria-label="Close">
            <svg width="9" height="9" viewBox="0 0 9 9" aria-hidden="true"><path d="M0.500 0.500L8.500 8.500M8.500 0.500L0.500 8.500" stroke="#a2abaf" strokeWidth="1.300" /></svg>
          </button>
        </div>
      </header>
      <div className="flex h-5 shrink-0">
        <Minimap />
        <button aria-label="Scroll right" className="ml-[14px] grid h-[19px] w-[19px] shrink-0 place-items-center border border-[#6b757b] bg-[#525b61]">
          <Chevron d={RIGHT} />
        </button>
        <button aria-label="Zoom" className="ml-px grid h-[19px] w-[19px] shrink-0 place-items-center border border-[#6b757b] bg-[#525b61]">
          <span className="size-[3px] bg-[#20272b]" />
        </button>
      </div>
      <div className="flex min-h-0 flex-1">
        <div className="flex min-w-0 flex-1 flex-col">
          <Timeline />
          <div className="relative min-h-0 flex-1 overflow-hidden">
            <GridBackdrop />
            <div className="relative flex flex-col">
              {TRACKS.map((_, i) => (
                <Track key={i} index={i} />
              ))}
            </div>
          </div>
        </div>
        <div className="flex w-5 shrink-0 flex-col border-l border-[#252c31] bg-[#3a4147]">
          <button aria-label="Scroll up" className="grid h-[19px] shrink-0 place-items-center border border-[#6b757b] bg-[#525b61]"><Chevron d={UP} /></button>
          <div className="mt-[3px] h-8 shrink-0 border border-[#6b757b] bg-[#525b61]" />
          <div className="flex-1" />
          <button aria-label="Scroll down" className="grid h-[19px] shrink-0 place-items-center border border-[#6b757b] bg-[#525b61]"><Chevron d={DOWN} /></button>
        </div>
      </div>
    </section>
  );
}

export default function App() {
  return (
    <main className={`flex h-screen w-full select-none overflow-hidden bg-[#363f45] ${FONT}`}>
      <ChannelRack />
      <Playlist />
    </main>
  );
}
